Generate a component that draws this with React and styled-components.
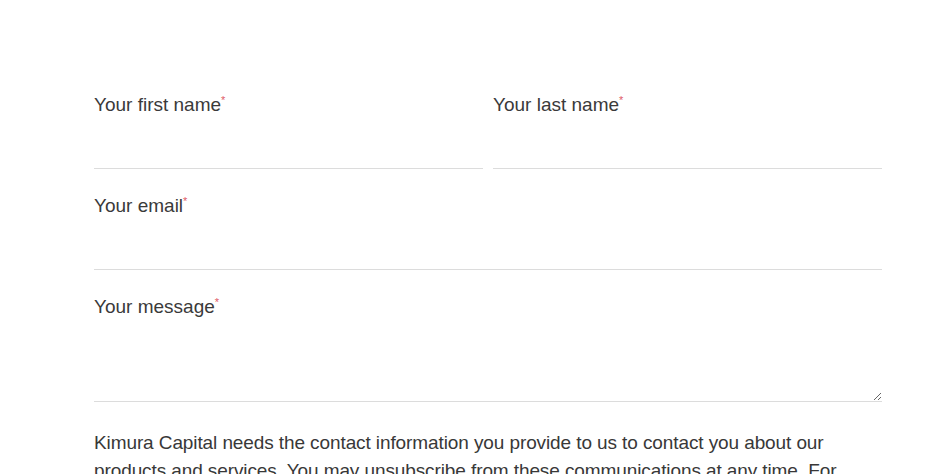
import React from 'react'
import styled, { createGlobalStyle } from 'styled-components'

const GlobalStyle = createGlobalStyle`
  body {
    margin: 0;
    background: #ffffff;
    font-family: "Liberation Sans", Arial, sans-serif;
    color: #333333;
  }
`

const Form = styled.form`
  width: 788px;
  margin-left: 94px;
  padding-top: 93px;
  display: flex;
  flex-direction: column;
  gap: 25px;
`

const Row = styled.div`
  display: grid;
  grid-template-columns: 1fr 1fr;
  column-gap: 10px;
`

const Field = styled.div`
  display: flex;
  flex-direction: column;
`

const Label = styled.label`
  font-size: 19px;
  line-height: 23px;
  color: #3a3a3a;
`

const Star = styled.span`
  color: #e05a66;
  font-size: 11px;
  vertical-align: top;
  line-height: 14px;
`

const Input = styled.input`
  height: 53px;
  box-sizing: border-box;
  border: none;
  border-bottom: 1px solid #dcdcdc;
  outline: none;
  background: transparent;
  font: inherit;
  padding: 0;
`

const TextArea = styled.textarea`
  height: 84px;
  box-sizing: border-box;
  border: none;
  border-bottom: 1px solid #dcdcdc;
  outline: none;
  background: transparent;
  font: inherit;
  padding: 0;
  resize: vertical;
`

const Notice = styled.p`
  margin: 2px 0 0;
  max-width: 780px;
  font-size: 19px;
  line-height: 28px;
  color: #383838;
  letter-spacing: -0.1px;
`

const App = () => {
  return (
    <>
      <GlobalStyle />
      <Form>
        <Row>
          <Field>
            <Label>Your first name<Star>*</Star></Label>
            <Input />
          </Field>
          <Field>
            <Label>Your last name<Star>*</Star></Label>
            <Input />
          </Field>
        </Row>
        <Field>
          <Label>Your email<Star>*</Star></Label>
          <Input />
        </Field>
        <Field>
          <Label>Your message<Star>*</Star></Label>
          <TextArea />
        </Field>
        <Notice>
          Kimura Capital needs the contact information you provide to us to contact you about our
          products and services. You may unsubscribe from these communications at any time. For
          information on how to unsubscribe, as well as our privacy practices and commitment to
          protecting your privacy, please review our Privacy Policy.
        </Notice>
      </Form>
    </>
  )
}

export default App
